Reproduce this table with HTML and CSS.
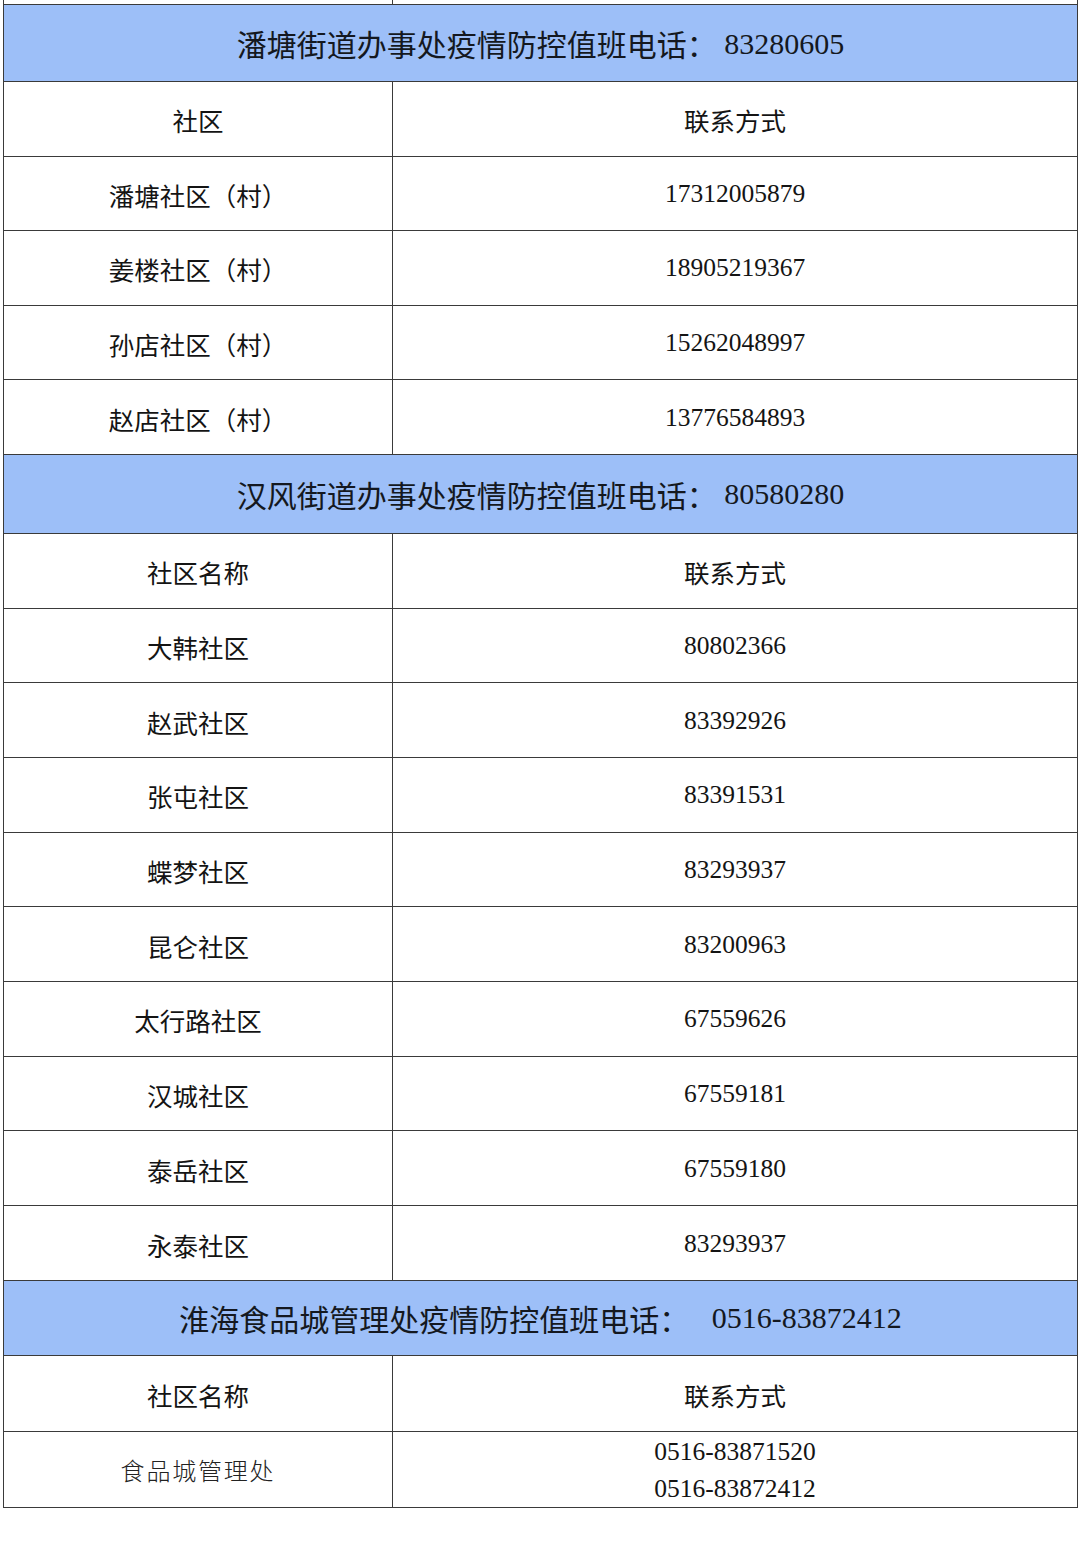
FILE: index.html
```html
<!DOCTYPE html>
<html lang="zh-CN">
<head>
<meta charset="utf-8">
<title>疫情防控值班电话</title>
<link rel="stylesheet" href="styles.css">
</head>
<body>
<div class="sheet">
  <div class="cell cut"></div><div class="cell cut"></div>

  <div class="cell head h1"><span class="zh">潘塘街道办事处疫情防控值班电话：</span><span class="num">&nbsp;83280605</span></div>
  <div class="cell cn">社区</div><div class="cell cn">联系方式</div>
  <div class="cell cn r1">潘塘社区（村）</div><div class="cell num r1">17312005879</div>
  <div class="cell cn r1">姜楼社区（村）</div><div class="cell num r1">18905219367</div>
  <div class="cell cn r1">孙店社区（村）</div><div class="cell num r1">15262048997</div>
  <div class="cell cn r1">赵店社区（村）</div><div class="cell num r1">13776584893</div>

  <div class="cell head h2"><span class="zh">汉风街道办事处疫情防控值班电话：</span><span class="num">&nbsp;80580280</span></div>
  <div class="cell cn r2">社区名称</div><div class="cell cn r2">联系方式</div>
  <div class="cell cn r2">大韩社区</div><div class="cell num r2">80802366</div>
  <div class="cell cn r2">赵武社区</div><div class="cell num r2">83392926</div>
  <div class="cell cn r2">张屯社区</div><div class="cell num r2">83391531</div>
  <div class="cell cn r2">蝶梦社区</div><div class="cell num r2">83293937</div>
  <div class="cell cn r2">昆仑社区</div><div class="cell num r2">83200963</div>
  <div class="cell cn r2">太行路社区</div><div class="cell num r2">67559626</div>
  <div class="cell cn r2">汉城社区</div><div class="cell num r2">67559181</div>
  <div class="cell cn r2">泰岳社区</div><div class="cell num r2">67559180</div>
  <div class="cell cn r2">永泰社区</div><div class="cell num r2">83293937</div>

  <div class="cell head h3"><span class="zh">淮海食品城管理处疫情防控值班电话：</span><span class="num">&nbsp;&nbsp;&nbsp;0516-83872412</span></div>
  <div class="cell cn r3">社区名称</div><div class="cell cn r3">联系方式</div>
  <div class="cell light r3">食品城管理处</div><div class="cell num r3 two">0516-83871520<br>0516-83872412</div>
</div>
</body>
</html>
```

FILE: styles.css
```css
html, body {
  margin: 0;
  padding: 0;
  background: #ffffff;
}

body {
  padding-left: 3px;
  width: 1075px;
  font-family: "Noto Sans CJK SC", "Noto Sans", sans-serif;
  color: #141414;
}

.sheet {
  display: grid;
  grid-template-columns: 388px 1fr;
  gap: 1px;
  padding: 0 1px 1px 1px;
  background: #3a3a3a;
  width: 1075px;
  box-sizing: border-box;
}

.cell {
  background: #ffffff;
  display: flex;
  align-items: center;
  justify-content: center;
  text-align: center;
  height: 73.6px;
  box-sizing: border-box;
}

.cut {
  height: 4px;
}

.head {
  grid-column: 1 / span 2;
  background: #9dbff8;
  font-size: 30px;
  color: #141820;
}

.head .num {
  font-size: 30px;
}

.h1 { height: 76px; }
.h2 { height: 78px; }
.h3 { height: 74px; }

.r2 { height: 73.7px; }
.r3 { height: 75px; }

.cn {
  font-size: 25.5px;
  padding-top: 2px;
}

.num {
  font-family: "Liberation Serif", "Times New Roman", "DejaVu Serif", serif;
  font-size: 25.5px;
  white-space: pre;
  padding-top: 1px;
}

.light {
  font-size: 24px;
  font-weight: 300;
  letter-spacing: 1.8px;
  color: #222;
}

.two {
  flex-direction: column;
  line-height: 37px;
}
```
